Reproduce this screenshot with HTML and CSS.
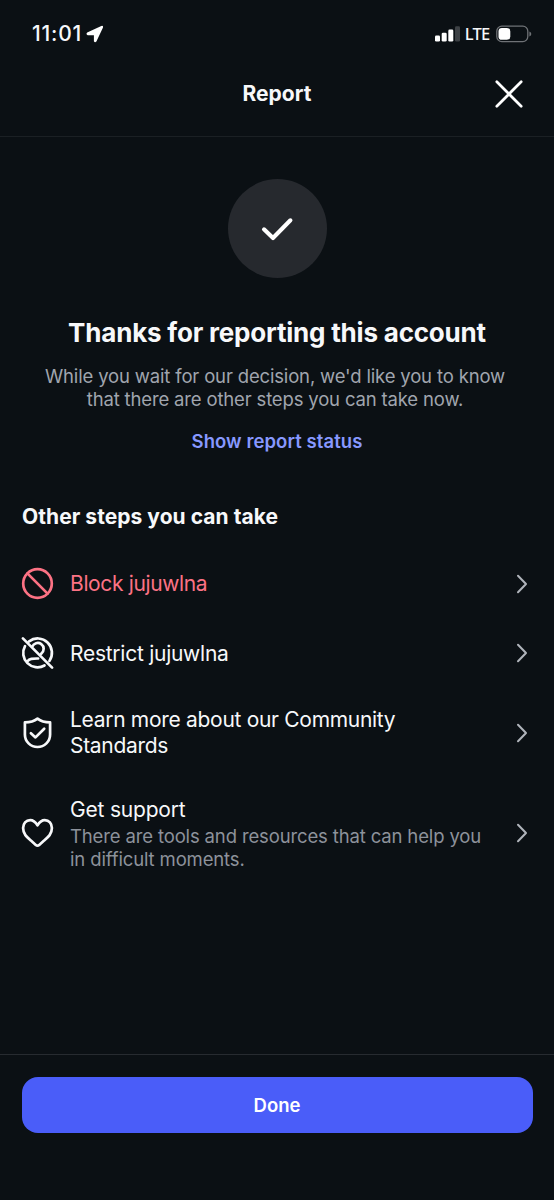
FILE: index.html
```html
<!DOCTYPE html>
<html lang="en">
<head>
<meta charset="utf-8">
<title>Report</title>
<link rel="stylesheet" href="styles.css">
</head>
<body>
<div class="screen">
  <div class="status">
    <div class="status-left">
      <span class="time">11:01</span>
      <svg width="18" height="18" viewBox="0 0 18 18"><path d="M1.2 7.4 15.3.9Q17.6.3 17 2.5L10.4 16.4Q9 18.1 7.9 16.2V10.2H1.8Q-.4 9 1.2 7.4Z" fill="#fff"/></svg>
    </div>
    <div class="status-right">
      <svg width="26" height="16" viewBox="0 0 26 16" fill="#fff"><rect x="0" y="9.5" width="5" height="6" rx="1.3"/><rect x="6.7" y="6.7" width="5" height="8.8" rx="1.3"/><rect x="13.3" y="3.6" width="5" height="11.9" rx="1.3"/><rect x="20" y=".3" width="5" height="15.2" rx="1.3" fill="#3d4145"/></svg>
      <span class="lte">LTE</span>
      <svg width="36" height="18" viewBox="0 0 36 18"><rect x=".8" y="1.2" width="31" height="15.4" rx="5" fill="none" stroke="#6f7276" stroke-width="1.3"/><rect x="2.5" y="3" width="11.8" height="11.8" rx="3.4" fill="#fff"/><path d="M33.4 6.5Q35.3 7.2 35.3 9T33.4 11.5Z" fill="#6f7276"/></svg>
    </div>
  </div>
  <header class="nav">
    <h1 class="nav-title">Report</h1>
    <svg class="close" width="28" height="28" viewBox="0 0 28 28"><path d="M1.8 1.8 26.2 26.2M26.2 1.8 1.8 26.2" stroke="#fff" stroke-width="2.7" stroke-linecap="round"/></svg>
  </header>
  <main class="content">
    <section class="hero">
      <div class="badge"><svg width="32" height="24" viewBox="0 0 32 24"><path d="M3 12.3 12 21 29.4 3.3" fill="none" stroke="#fff" stroke-width="4.1" stroke-linecap="round" stroke-linejoin="round"/></svg></div>
      <h2 class="title">Thanks for reporting this account</h2>
      <p class="lead">While you wait for our decision, we'd like you to know<br>that there are other steps you can take now.</p>
      <a class="link">Show report status</a>
    </section>
    <h3 class="heading">Other steps you can take</h3>
    <ul class="list">
      <li class="row danger">
        <svg class="icon" viewBox="-.5 .5 32 32"><circle cx="16" cy="16" r="14.3"/><path d="M5.9 5.9 26.1 26.1"/></svg>
        <div class="label"><span class="name block">Block jujuwlna</span></div>
        <svg class="chevron" viewBox="0 0 12 20"><path d="M2 1.8 10 10 2 18.2"/></svg>
      </li>
      <li class="row second">
        <svg class="icon" viewBox="-.5 0 32 32"><path d="M1.4 1.4 30.6 30.6M7.6 4.3A14.3 14.3 0 0 1 27.9 23.9M3.5 9.1A14.3 14.3 0 0 0 23 28.5M10.7 9.9A5.9 5.9 0 1 1 19.8 16.6M6 24.3C8 21.5 11 21.4 16.6 21.5"/></svg>
        <div class="label"><span class="name restrict">Restrict jujuwlna</span></div>
        <svg class="chevron" viewBox="0 0 12 20"><path d="M2 1.8 10 10 2 18.2"/></svg>
      </li>
      <li class="row learn">
        <svg class="icon" viewBox="-.5 0 32 32"><path d="M16 1.6C12.5 4.4 8 5.4 3.4 5.4V17.5C3.4 24.5 9 30 16 30S28.6 24.5 28.6 17.5V5.4C24 5.4 19.5 4.4 16 1.6Z"/><path d="M9.4 16.2 14 20.4 22.7 11.8"/></svg>
        <div class="label"><span class="name standards">Learn more about our Community<br>Standards</span></div>
        <svg class="chevron" viewBox="0 0 12 20"><path d="M2 1.8 10 10 2 18.2"/></svg>
      </li>
      <li class="row support">
        <svg class="icon" viewBox="-.5 0 32 32"><path d="M16 8.4C13.9 4.9 11.5 3.1 8.7 3.1 4.5 3.1 1.6 6.6 1.6 11.1 1.6 17 5.5 20.2 9.4 23.6L14.3 27.9Q16 29.4 17.7 27.9L22.6 23.6C26.5 20.2 30.4 17 30.4 11.1 30.4 6.6 27.5 3.1 23.3 3.1 20.5 3.1 18.1 4.9 16 8.4Z"/></svg>
        <div class="label"><span class="name get">Get support</span><span class="detail">There are tools and resources that can help you<br>in difficult moments.</span></div>
        <svg class="chevron" viewBox="0 0 12 20"><path d="M2 1.8 10 10 2 18.2"/></svg>
      </li>
    </ul>
  </main>
  <footer class="footer"><button class="done">Done</button></footer>
</div>
</body>
</html>
```

FILE: styles.css
```css
* { box-sizing: border-box; margin: 0; padding: 0; }
body { background: #0b1014; color: #f7f8fa; font-family: Inter, "Liberation Sans", sans-serif; }
svg { display: block; flex: none; overflow: visible; }
.screen { width: 554px; height: 1200px; display: flex; flex-direction: column; overflow: hidden; }
.status { height: 67px; display: flex; justify-content: space-between; align-items: center; padding: 0 22.5px 0 32px; }
.status-left, .status-right { display: flex; align-items: center; }
.status-left { gap: 4px; }
.status-right { gap: 4px; }
.time { font-size: 21px; font-weight: 500; letter-spacing: 0.8px; }
.lte { font-family: "Noto Sans", sans-serif; font-size: 16.5px; line-height: 20px; font-weight: 500; letter-spacing: -0.7px; margin-right: 2px; }
.nav { height: 70px; display: grid; grid-template-columns: 1fr auto 1fr; align-items: center; padding: 0 31px 15px; border-bottom: 1px solid #1b2024; }
.nav-title { grid-column: 2; font-size: 21px; line-height: 26px; font-weight: 700; }
.close { justify-self: end; }
.content { flex: 1; }
.hero { display: flex; flex-direction: column; align-items: center; padding-top: 42px; text-align: center; }
.badge { width: 99px; height: 99px; border-radius: 50%; background: #26292e; display: flex; align-items: center; justify-content: center; }
.title { margin-top: 38px; font-size: 26px; line-height: 34px; font-weight: 700; letter-spacing: -0.2px; white-space: nowrap; }
.lead { margin-top: 15px; padding-right: 4px; font-size: 18.5px; line-height: 22.7px; letter-spacing: -0.16px; color: #a0a5ae; white-space: nowrap; }
.link { margin-top: 19px; font-size: 18.5px; line-height: 24px; font-weight: 600; letter-spacing: 0.08px; color: #8798ff; }
.heading { margin: 51px 0 0 22px; font-size: 21px; line-height: 26px; font-weight: 700; letter-spacing: 0.05px; }
.list { list-style: none; margin-top: 18.5px; }
.row { display: flex; align-items: center; height: 69.5px; padding: 0 26px 0 21px; }
.learn { height: 90px; }
.support { height: 110px; }
.icon { width: 32px; height: 32px; fill: none; stroke: #f7f8fa; stroke-width: 2.7; stroke-linecap: round; stroke-linejoin: round; }
.danger .icon { stroke: #fc7284; }
.danger .name { color: #fc7284; }
.label { flex: 1; margin-left: 17px; display: flex; flex-direction: column; align-items: flex-start; white-space: nowrap; }
.second .label { padding-top: 2px; }
.support .label { padding-top: 2px; }
.name { font-size: 21px; line-height: 25.6px; letter-spacing: -0.3px; }
.block { letter-spacing: -0.36px; }
.restrict { letter-spacing: -0.26px; }
.get { letter-spacing: -0.2px; }
.detail { font-size: 18.5px; line-height: 22.7px; letter-spacing: -0.14px; color: #8d929b; margin-top: 2px; }
.chevron { width: 12px; height: 20px; fill: none; stroke: #b0b4bb; stroke-width: 2; stroke-linecap: round; stroke-linejoin: round; }
.footer { height: 146px; border-top: 1px solid #272b30; padding: 22px 21.5px 0; }
.done { display: block; width: 100%; height: 56px; border: 0; border-radius: 16px; background: #4a5df9; color: #fff; font: 600 18.5px Inter, "Liberation Sans", sans-serif; }
```
